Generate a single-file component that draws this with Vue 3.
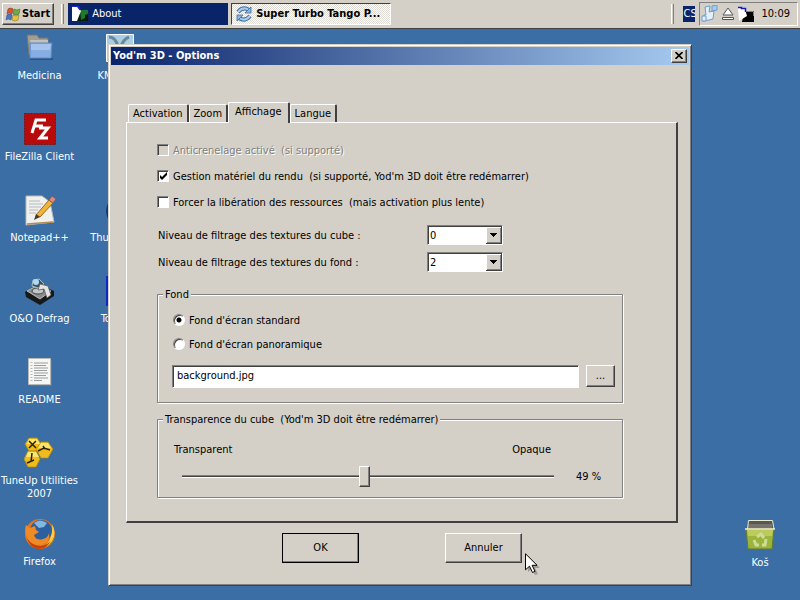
<template>
  <div class="screen">
    <header class="taskbar">
      <button class="start">
        <svg width="16" height="16" viewBox="0 0 16 16">
          <path d="M3 3q3-2 5 0L7 8q-3-2-5 0z" fill="#d9532c" stroke="#7b3a2a" stroke-width=".6" />
          <path d="M9 3q3 2 6 0l-1 5q-3 2-6 0z" fill="#6fa94a" stroke="#3f6b35" stroke-width=".6" />
          <path d="M2 9q3-2 5 0l-1 5q-3-2-5 0z" fill="#4a78c8" stroke="#2d4a86" stroke-width=".6" />
          <path d="M8 9q3 2 6 0l-1 5q-3 2-6 0z" fill="#e8c23c" stroke="#8d7425" stroke-width=".6" />
        </svg>
        <span>Start</span>
      </button>
      <div class="grip"></div>
      <button class="task flash">
        <svg width="16" height="16" viewBox="0 0 16 16">
          <path d="M6 4h10v11H5z" fill="#0a1a0a" />
          <path d="M8 4h8v4l-3 1v3l-4 2z" fill="#1d7a2c" />
          <path d="M0 1h5l4 4-4 10H0z" fill="#fff" />
          <path d="M0 0h6l2 4" fill="none" stroke="#2424e0" stroke-width="1.5" />
        </svg>
        <span>About</span>
      </button>
      <button class="task pressed">
        <svg width="16" height="16" viewBox="0 0 16 16">
          <g fill="none" stroke="#3c6ca8" stroke-width="4">
            <path d="M2 6q5-6 11-2M14 10q-5 6-11 2" />
          </g>
          <g fill="none" stroke="#a9cbec" stroke-width="2">
            <path d="M2 6q5-6 11-2M14 10q-5 6-11 2" />
          </g>
          <path d="M15 1v6H9zM1 15V9h6z" fill="#8ab6e0" stroke="#3c6ca8" stroke-width=".8" />
        </svg>
        <span>Super Turbo Tango P...</span>
      </button>
      <div class="grip tray-grip"></div>
      <div class="lang">CS</div>
      <div class="tray">
        <svg width="17" height="17" viewBox="0 0 17 17">
          <g fill="#e4f0fb" stroke="#6d9ccc">
            <path d="M4 2l5-1-1 6 5-1-1 8-4 1-6 1 1-6h2z" />
            <path d="M11 1l5-1v5l-5 1z" fill="#a9ccee" />
            <path d="M1 11h4v5H1z" />
          </g>
        </svg>
        <svg width="14" height="14" viewBox="0 0 14 14">
          <path d="M7 1l5 7H2z" fill="#fff" stroke="#555" />
          <path d="M1.500 10.500h11v2h-11z" fill="#fff" stroke="#555" />
        </svg>
        <svg width="16" height="16" viewBox="0 0 16 16">
          <path d="M6 5h10v11H4z" fill="#000" />
          <path d="M8 5.500h7.500V10" fill="none" stroke="#20c030" />
          <path d="M0 2l7 1 2 7-8 5z" fill="#fff" />
          <path d="M0 1.500h3.500v1h4V6" fill="none" stroke="#1414c8" stroke-width="1.500" />
        </svg>
        <time>10:09</time>
      </div>
    </header>

    <main class="desktop">
      <div class="icons">
        <div v-for="icon in icons" :key="icon.name" class="icon" :style="{ gridColumn: icon.col, gridRow: icon.row }">
          <svg width="32" height="32" viewBox="0 0 32 32">
            <template v-if="icon.name === 'Medicina'">
              <path d="M3 3h10l2 3h9v17H5z" fill="#a09e94" stroke="#77756b" />
              <path d="M6 8h18v4H7z" fill="#c4c1b6" />
              <path d="M6 27h23" stroke="#2c527e" stroke-width="2" />
              <path d="M6 11h22l-1 15H6z" fill="#86aee2" stroke="#5a89c8" />
              <path d="M7 12h20l-1 6H7z" fill="#a4c4ee" />
            </template>
            <template v-else-if="icon.name === 'KMPlayer'">
              <path d="M1.500 2.500h27v27h-27z" fill="#a9cfe6" stroke="#fff" />
              <path d="M4 5q7 0 9 10M24 5q-6 2-9 12l-2 8" fill="none" stroke="#6c8796" stroke-width="3" />
            </template>
            <template v-else-if="icon.name === 'FileZilla Client'">
              <path d="M.5.500h31v31H.5z" fill="#b80a0a" stroke="#7c1010" stroke-dasharray="2 1" />
              <path d="M8 20L12 7h10M11 13h8" fill="none" stroke="#fff" stroke-width="3" />
              <path d="M15 15h9l-8 10h8" fill="none" stroke="#fff" stroke-width="3" />
            </template>
            <template v-else-if="icon.name === 'Nero'">
              <circle cx="16" cy="18" r="13" fill="#8f9a6a" />
            </template>
            <template v-else-if="icon.name === 'Notepad++'">
              <path d="M2 2h16l8 6 4 20-28 3z" fill="#f0f0ee" stroke="#b9b9b6" />
              <path d="M5 7h11M5 10h14M5 13h12M5 16h9M5 19h7" stroke="#b4b8bc" />
              <path d="M3 30l26-2" stroke="#b88950" stroke-width="1.500" />
              <path d="M12 21l13-15 4 3-13 14z" fill="#f0b53a" stroke="#9b691c" />
              <path d="M25 6l3-4 4 3-3 4z" fill="#d88a84" stroke="#7f5250" stroke-width=".7" />
              <path d="M12 20l4 3-6 3z" fill="#49382a" />
            </template>
            <template v-else-if="icon.name === 'Thunderbird'">
              <circle cx="16" cy="17" r="15" fill="#173a6e" />
              <circle cx="16" cy="17" r="12" fill="#5b82ba" />
            </template>
            <template v-else-if="icon.name === 'O&O Defrag'">
              <path d="M1 17l13-8 16 7v5L16 30 2 22z" fill="#16181a" />
              <path d="M3 16l11-6 13 6-11 8z" fill="#8a8d8c" stroke="#d0d2d0" stroke-width=".8" />
              <ellipse cx="14" cy="16" rx="6" ry="3" fill="#c3c7c8" stroke="#44484a" />
              <path d="M9 5l6-1 5 5-6 4-6-2z" fill="#42525e" stroke="#a9bfcb" />
              <circle cx="12" cy="7" r="3" fill="#a9dcf0" />
              <path d="M16 9l8 2 3 9-4 3-3-9-6 1z" fill="#e4e4e0" stroke="#555" stroke-width=".7" />
            </template>
            <template v-else-if="icon.name === 'TomTom'">
              <path d="M1 1h30v30H1z" fill="#1226c4" />
            </template>
            <template v-else-if="icon.name === 'README'">
              <path d="M6 4h22v26H6z" fill="#657487" />
              <path d="M4.500 2.500h22v26h-22z" fill="#f6f6f4" stroke="#b8bab8" />
              <path d="M10 7h14M10 9.500h12M10 12h14M10 14.500h13M10 17h14M10 19.500h12M10 22h14M10 24.500h8" stroke="#9a9c9e" />
              <path d="M7.500 6v20" stroke="#b6b8ba" stroke-width="2" stroke-dasharray="1 2" />
            </template>
            <template v-else-if="icon.name === 'TuneUp Utilities 2007'">
              <g fill="#f0bc1c" stroke="#b88a14" stroke-width=".7">
                <path d="M5 1h8l4 6-4 7H5L1 7z" />
                <path d="M17 5h7l5 7-5 9h-7l-5-9z" />
                <path d="M4 14h8l4 8-4 8H4l-4-8z" />
              </g>
              <path d="M5 2h8l3 5H3zM17 6h7l3 5H14zM4 15h8l3 5H2z" fill="#fbe672" />
              <path d="M5 4l7 7M12 4l-7 7M14 14l6-3 6 2M19 9l2 3M8 16l-1 9M3 26l7-3" stroke="#2b2208" stroke-width="1.500" fill="none" />
            </template>
            <template v-else-if="icon.name === 'Firefox'">
              <circle cx="16" cy="16" r="15" fill="#e2741c" />
              <circle cx="17" cy="13" r="11" fill="#2b5f9f" />
              <path d="M10 5q6-5 13 0l-3 4-5 1z" fill="#7db9e4" />
              <path d="M28 6q5 9 0 17-6 8-14 8 9-3 12-10 3-7 2-15z" fill="#f7d23e" />
              <path d="M2 7l4 3 5-2 1 4 3 2-5 3q2 6 9 4 5-1 6-6 2 9-7 12Q6 28 3 20 0 13 2 7z" fill="#f08a24" />
              <path d="M3 20q5 8 14 8 7-1 10-6-4 9-12 9Q6 30 3 20z" fill="#c9400f" />
            </template>
          </svg>
          <span>{{ icon.name }}</span>
        </div>
      </div>

      <div class="icon bin">
        <svg width="32" height="32" viewBox="0 0 32 32">
          <path d="M2 10h28l-2 20H4z" fill="#9ab43c" stroke="#66792c" />
          <path d="M3 11h26l-1 6H4z" fill="#bccb5c" />
          <path d="M4 2h25l1 8H2z" fill="#5a5753" />
          <path d="M4 5h24v5H3z" fill="#77736e" />
          <path d="M3.500 10L4.500 1.500h24L30 10" fill="none" stroke="#e9ecd0" />
          <path d="M1 10h30" stroke="#f2f4c8" stroke-width="1.500" />
          <path d="M13 18l4-3 3 4M10 21l2 5h3M22 20l-1 6h-3" fill="none" stroke="#cfdc98" stroke-width="3" />
        </svg>
        <span>Koš</span>
      </div>

      <form class="dialog" @submit.prevent>
        <div class="titlebar">
          <h1>Yod'm 3D - Options</h1>
          <button type="button" class="close" aria-label="Fermer">
            <svg width="8" height="7" viewBox="0 0 8 7">
              <path d="M.5 0l7 7M7.500 0l-7 7" stroke="#000" stroke-width="1.600" />
            </svg>
          </button>
        </div>

        <div class="content">
          <div class="tabs">
            <button
              v-for="tab in tabs"
              :key="tab"
              type="button"
              :class="['tab', { active: tab === activeTab }]"
              @click="activeTab = tab"
            >
              {{ tab }}
            </button>
          </div>

          <div class="panel">
            <label class="check disabled">
              <input type="checkbox" disabled />
              <span>Anticrenelage activé&nbsp; (si supporté)</span>
            </label>
            <label class="check">
              <input v-model="hardware" type="checkbox" />
              <span>Gestion matériel du rendu&nbsp; (si supporté, Yod'm 3D doit être redémarrer)</span>
            </label>
            <label class="check">
              <input v-model="release" type="checkbox" />
              <span>Forcer la libération des ressources&nbsp; (mais activation plus lente)</span>
            </label>

            <div class="filters">
              <label for="cube">Niveau de filtrage des textures du cube :</label>
              <select id="cube" v-model="cubeFilter">
                <option v-for="n in levels" :key="n">{{ n }}</option>
              </select>
              <label for="fond">Niveau de filtrage des textures du fond :</label>
              <select id="fond" v-model="backFilter">
                <option v-for="n in levels" :key="n">{{ n }}</option>
              </select>
            </div>

            <fieldset class="background">
              <legend>Fond</legend>
              <div class="group">
                <label class="radio">
                  <input v-model="wallpaper" type="radio" name="wallpaper" value="standard" />
                  <span>Fond d'écran standard</span>
                </label>
                <label class="radio">
                  <input v-model="wallpaper" type="radio" name="wallpaper" value="wide" />
                  <span>Fond d'écran panoramique</span>
                </label>
                <div class="file">
                  <input v-model="file" type="text" aria-label="Fichier" />
                  <button type="button" class="btn">...</button>
                </div>
              </div>
            </fieldset>

            <fieldset class="opacity">
              <legend>Transparence du cube&nbsp; (Yod'm 3D doit être redémarrer)</legend>
              <div class="group scale">
                <label for="opacity" class="ends">
                  <span>Transparent</span>
                  <span>Opaque</span>
                </label>
                <input id="opacity" v-model="opacity" type="range" min="0" max="100" />
                <output for="opacity">{{ opacity }} %</output>
              </div>
            </fieldset>
          </div>

          <div class="actions">
            <button type="submit" class="btn default">OK</button>
            <button type="button" class="btn">Annuler</button>
          </div>
        </div>
      </form>
    </main>

    <svg class="pointer" width="15" height="22" viewBox="0 0 15 22">
      <path d="M3 3v16l4-3 3 6 3-1-3-6h5z" fill="#000" opacity=".25" />
      <path d="M.5.800v16l4-3.600 3 6.300 2.500-1.200-2.900-6h5z" fill="#fff" stroke="#000" />
    </svg>
  </div>
</template>

<script setup>
import { ref } from 'vue';

const icons = [
  { name: 'Medicina', col: 1, row: 1 },
  { name: 'FileZilla Client', col: 1, row: 2 },
  { name: 'Notepad++', col: 1, row: 3 },
  { name: 'O&O Defrag', col: 1, row: 4 },
  { name: 'README', col: 1, row: 5 },
  { name: 'TuneUp Utilities 2007', col: 1, row: 6 },
  { name: 'Firefox', col: 1, row: 7 },
  { name: 'KMPlayer', col: 2, row: 1 },
  { name: 'Nero', col: 2, row: 2 },
  { name: 'Thunderbird', col: 2, row: 3 },
  { name: 'TomTom', col: 2, row: 4 }
];

const tabs = ['Activation', 'Zoom', 'Affichage', 'Langue'];
const activeTab = ref('Affichage');

// Options
const levels = ['0', '1', '2', '3', '4'];
const hardware = ref(true);
const release = ref(false);
const cubeFilter = ref('0');
const backFilter = ref('2');
const wallpaper = ref('standard');
const file = ref('background.jpg');
const opacity = ref(49);
</script>

<style>
body {
  background: #3a6ea5;
}
</style>

<style scoped>
.screen {
  --face: #d4d0c8;
  --shadow: #808080;
  --dark: #404040;
  position: relative;
  display: flex;
  flex-direction: column;
  min-height: 100vh;
  overflow: hidden;
  font: 11px/14px Tahoma, "DejaVu Sans Condensed", "Noto Sans", sans-serif;
  color: #000;
}

.screen *,
.screen *::before {
  box-sizing: border-box;
}

button,
input,
select {
  margin: 0;
  font: inherit;
  color: inherit;
}

svg {
  flex: none;
  display: block;
}

/* barre des tâches */
.taskbar {
  display: flex;
  align-items: center;
  height: 29px;
  padding: 0 2px 1px;
  background: var(--face);
  border-bottom: 1px solid var(--dark);
}

.start {
  display: flex;
  align-items: center;
  gap: 1px;
  height: 22px;
  padding: 0 3px 0 2px;
  background: var(--face);
  border: 1px solid;
  border-color: #fff var(--dark) var(--dark) #fff;
  box-shadow: inset -1px -1px var(--shadow);
  font-weight: bold;
}

.grip {
  width: 3px;
  height: 20px;
  margin: 0 4px 0 7px;
  border-left: 1px solid #fff;
  border-right: 1px solid var(--shadow);
}

.task {
  display: flex;
  align-items: center;
  gap: 4px;
  flex: 0 1 160px;
  height: 22px;
  margin-right: 3px;
  padding: 0 4px;
  border: 0;
  text-align: left;
  white-space: nowrap;
}

.flash {
  background: #0a246a;
  color: #fff;
}

.pressed {
  background: repeating-conic-gradient(#fff 0 25%, #dedbd5 0 50%) 0 0 / 2px 2px;
  border: 1px solid;
  border-color: var(--dark) #fff #fff var(--dark);
  font-weight: bold;
}

.tray-grip {
  margin: 0 9px 0 auto;
}

.lang {
  width: 12px;
  height: 16px;
  overflow: hidden;
  background: #0a246a;
  color: #fff;
  line-height: 16px;
}

.tray {
  display: flex;
  align-items: center;
  gap: 3px;
  height: 24px;
  margin-left: 4px;
  padding: 0 7px 0 1px;
  border: 1px solid;
  border-color: var(--shadow) #fff #fff var(--shadow);
}

.tray time {
  margin-left: 4px;
}

.task span,
.tray time {
  padding-top: 1px;
}

/* bureau */
.desktop {
  position: relative;
  flex: 1;
  display: flex;
  align-items: center;
  justify-content: center;
  background: #3a6ea5;
}

.icons {
  position: absolute;
  top: 3px;
  left: 0;
  display: grid;
  grid-template-columns: 79px 79px;
  grid-auto-rows: 81px;
  column-gap: 2px;
}

.icon {
  display: flex;
  flex-direction: column;
  align-items: center;
  gap: 5px;
  color: #fff;
  line-height: 13px;
  text-align: center;
}

.bin {
  position: absolute;
  right: 0;
  bottom: 31px;
  width: 80px;
}

/* fenêtre */
.dialog {
  position: relative;
  width: 584px;
  max-width: 100%;
  background: var(--face);
  border: 1px solid;
  border-color: var(--face) var(--dark) var(--dark) var(--face);
  box-shadow: inset 1px 1px #fff, inset -1px -1px var(--shadow);
  padding: 2px;
}

.titlebar {
  display: flex;
  align-items: center;
  justify-content: space-between;
  height: 18px;
  padding: 0 2px;
  background: linear-gradient(to right, #0a246a, #a6caf0);
}

.titlebar h1 {
  margin: 0;
  padding-top: 1px;
  font-size: 11px;
  color: #fff;
}

.close {
  display: flex;
  align-items: center;
  justify-content: center;
  width: 16px;
  height: 14px;
  padding: 0;
}

.btn,
.close {
  background: var(--face);
  border: 1px solid;
  border-color: #fff var(--dark) var(--dark) #fff;
  box-shadow: inset -1px -1px var(--shadow);
}

.content {
  padding: 37px 11px 20px 15px;
}

.tabs {
  display: flex;
  align-items: flex-end;
  padding-left: 2px;
}

.tab {
  height: 18px;
  padding: 2px 4px 0;
  background: var(--face);
  border: 1px solid #fff;
  border-right: 2px solid var(--dark);
  border-bottom: 0;
  border-radius: 2px 2px 0 0;
}

.tab.active {
  position: relative;
  height: 21px;
  margin-bottom: -1px;
  padding: 0 6px 1px;
}

.panel {
  padding: 14px 52px 22px 30px;
  border: 1px solid #fff;
  border-right: 2px solid var(--dark);
  border-bottom: 2px solid var(--dark);
}

.check {
  display: flex;
  align-items: center;
  gap: 4px;
  height: 26px;
}

.check span,
.radio span,
.filters label {
  padding-top: 2px;
}

.check.disabled {
  color: var(--shadow);
  text-shadow: 1px 1px #fff;
}

.check input,
.radio input {
  flex: none;
  appearance: none;
  width: 12px;
  height: 12px;
  background: #fff;
  border: 1px solid;
  border-color: var(--shadow) #fff #fff var(--shadow);
  box-shadow: inset 1px 1px var(--dark);
}

.check input:disabled {
  background: var(--face);
}

.check input:checked {
  background: #fff url("data:image/svg+xml,%3Csvg xmlns='http://www.w3.org/2000/svg' width='10' height='10'%3E%3Cpath d='M2 4v3l2 2 5-5V1L4 6z'/%3E%3C/svg%3E") no-repeat;
}

.filters {
  display: grid;
  grid-template-columns: 269px 76px;
  grid-auto-rows: 27px;
  align-items: center;
  margin-top: 7px;
  padding-left: 1px;
}

select {
  appearance: none;
  height: 20px;
  padding: 2px 18px 0 2px;
  border: 1px solid;
  border-color: var(--shadow) #fff #fff var(--shadow);
  border-radius: 0;
  box-shadow: inset 1px 1px var(--dark);
  background: #fff url("data:image/svg+xml,%3Csvg xmlns='http://www.w3.org/2000/svg' width='16' height='17' shape-rendering='crispEdges'%3E%3Cpath fill='%23404040' d='M0 0h16v17H0z'/%3E%3Cpath fill='%23fff' d='M0 0h15v16H0z'/%3E%3Cpath fill='%23808080' d='M1 1h14v15H1z'/%3E%3Cpath fill='%23d4d0c8' d='M1 1h13v14H1z'/%3E%3Cpath d='M4 6h7v1H4zM5 7h5v1H5zM6 8h3v1H6zM7 9h1v1H7z'/%3E%3C/svg%3E") no-repeat right 1px;
}

fieldset {
  min-width: 0;
  margin: 0;
  padding: 0 4px;
  border: 2px solid var(--shadow);
  border-image: url("data:image/svg+xml,%3Csvg xmlns='http://www.w3.org/2000/svg' width='8' height='8' fill='none'%3E%3Cpath stroke='%23fff' d='M1.5 1.500h6v6h-6z'/%3E%3Cpath stroke='%23808080' d='M.5.500h6v6h-6z'/%3E%3C/svg%3E") 2;
}

legend {
  padding: 0 2px;
}

.group {
  padding: 6px 3px 14px 9px;
}

.background {
  margin-top: 12px;
}

.opacity {
  margin-top: 9px;
}

.radio {
  display: flex;
  align-items: center;
  gap: 4px;
  height: 24px;
  padding-left: 1px;
}

.radio input {
  border-radius: 50%;
}

.radio input:checked {
  background: radial-gradient(circle, #000 2px, #fff 3px);
}

.file {
  display: flex;
  gap: 7px;
  margin-top: 9px;
}

.file input {
  flex: 1;
  min-width: 0;
  height: 23px;
  padding: 0 4px 2px;
  background: #fff;
  border: 1px solid;
  border-color: var(--shadow) #fff #fff var(--shadow);
  box-shadow: inset 1px 1px var(--dark);
}

.file .btn {
  width: 29px;
  height: 22px;
  padding: 0;
}

.scale {
  display: grid;
  grid-template-columns: 1fr 46px;
  row-gap: 9px;
  align-items: center;
  padding-top: 16px;
  padding-bottom: 9px;
}

.ends {
  display: flex;
  justify-content: space-between;
  padding: 0 18px 0 2px;
}

.scale input {
  grid-row: 2;
  appearance: none;
  height: 22px;
  margin: 0 15px 0 10px;
  background: linear-gradient(var(--shadow) 1px, var(--dark) 1px 2px, #fff 2px) no-repeat center / 100% 3px;
}

.scale input::-webkit-slider-thumb {
  appearance: none;
  width: 11px;
  height: 21px;
  background: var(--face);
  border: 1px solid;
  border-color: #fff var(--dark) var(--dark) #fff;
  box-shadow: inset -1px -1px var(--shadow);
}

.scale output {
  grid-row: 2;
  padding-left: 7px;
}

.actions {
  display: flex;
  justify-content: center;
  gap: 86px;
  margin-top: 10px;
}

.actions .btn {
  width: 77px;
  height: 30px;
}

.actions .default {
  outline: 1px solid #000;
  outline-offset: -1px;
}

.pointer {
  position: absolute;
  top: 553px;
  left: 525px;
}
</style>
